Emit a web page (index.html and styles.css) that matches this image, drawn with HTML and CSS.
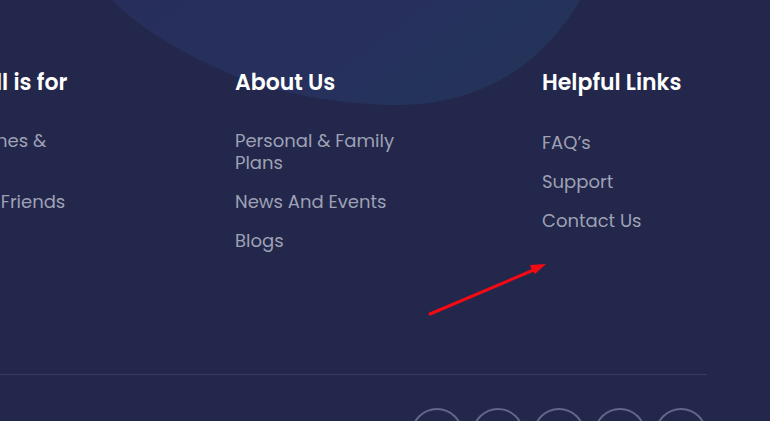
FILE: index.html
```html
<!DOCTYPE html>
<html lang="en">
<head>
<meta charset="utf-8">
<meta name="viewport" content="width=device-width, initial-scale=1">
<title>Footer</title>
<link rel="stylesheet" href="styles.css">
</head>
<body>
<footer class="footer">
  <svg class="blob" width="480" height="108" viewBox="0 0 480 108" aria-hidden="true">
    <defs>
      <linearGradient id="blob-fill" x1="0" y1="0" x2="1" y2="0.3">
        <stop offset="0" stop-color="#272e5b"/>
        <stop offset="0.6" stop-color="#27305c"/>
        <stop offset="0.8" stop-color="#24335c"/>
        <stop offset="1" stop-color="#25335a"/>
      </linearGradient>
    </defs>
    <path fill="url(#blob-fill)" d="M2 0C30 29 78 57 130 78C180 97 245 105 289 105C370 104 432 66 470 0Z"/>
  </svg>
  <div class="columns">
    <section class="column column-first">
      <h2 class="title">ll is for</h2>
      <ul class="links">
        <li class="tall"><a href="#">nes &amp;</a></li>
        <li><a href="#">&nbsp;Friends</a></li>
      </ul>
    </section>
    <section class="column">
      <h2 class="title">About Us</h2>
      <ul class="links">
        <li><a href="#">Personal &amp; Family Plans</a></li>
        <li><a href="#">News And Events</a></li>
        <li><a href="#">Blogs</a></li>
      </ul>
    </section>
    <section class="column">
      <h2 class="title title-spaced">Helpful Links</h2>
      <ul class="links">
        <li><a href="#">FAQ’s</a></li>
        <li><a href="#">Support</a></li>
        <li><a href="#">Contact Us</a></li>
      </ul>
    </section>
  </div>
  <div class="bottom">
    <a class="social" href="#"></a>
    <a class="social" href="#"></a>
    <a class="social" href="#"></a>
    <a class="social" href="#"></a>
    <a class="social" href="#"></a>
  </div>
  <svg class="arrow" width="120" height="54" viewBox="0 0 120 54" aria-hidden="true">
    <path d="M2 52L108 7" stroke="#f40a12" stroke-width="3" stroke-linecap="round"/>
    <path d="M118 2L102 3L104 8L107 12Z" fill="#f40a12"/>
  </svg>
</footer>
</body>
</html>
```
FILE: styles.css
```css
* {
  box-sizing: border-box;
}

body {
  margin: 0;
  background: #22274b;
  color: #9fa1b5;
  font-family: Poppins, Inter, "Open Sans", sans-serif;
  font-size: 18px;
  line-height: 22px;
}

.footer {
  position: relative;
  height: 100vh;
  padding-top: 67px;
  overflow: hidden;
}

.blob {
  position: absolute;
  top: 0;
  left: 110px;
}

.arrow {
  position: absolute;
  top: 262px;
  left: 428px;
}

.columns {
  position: relative;
  display: grid;
  grid-template-columns: 235fr 307fr 228fr;
  min-height: 307px;
}

.column-first {
  margin-left: -4px;
}

.title {
  margin: 0 0 31px;
  color: #fff;
  font-size: 22px;
  font-weight: 600;
  line-height: 32px;
}

.title-spaced {
  margin-bottom: 33px;
}

.links {
  display: flex;
  flex-direction: column;
  gap: 17px;
  max-width: 180px;
  margin: 0;
  padding: 0;
  list-style: none;
}

.tall {
  min-height: 44px;
}

.links a {
  color: inherit;
  text-decoration: none;
}

.bottom {
  display: flex;
  justify-content: flex-end;
  gap: 9px;
  margin-right: 63px;
  padding-top: 33px;
  border-top: 1px solid #373c60;
}

.social {
  width: 52px;
  height: 52px;
  border: 2px solid #626689;
  border-radius: 50%;
}
```
